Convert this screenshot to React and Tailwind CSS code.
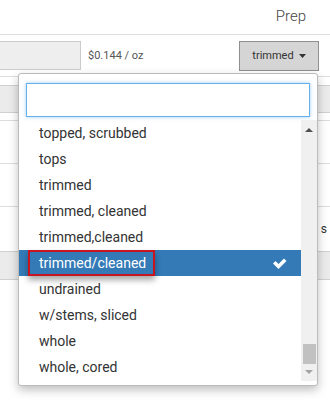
import React from "react";

const items = [
  "topped, scrubbed",
  "tops",
  "trimmed",
  "trimmed, cleaned",
  "trimmed,cleaned",
  "trimmed/cleaned",
  "undrained",
  "w/stems, sliced",
  "whole",
  "whole, cored",
];

export default function App() {
  return (
    <div
      className="relative w-[330px] h-[404px] overflow-hidden bg-white text-[#555]"
      style={{ fontFamily: "Roboto, 'Liberation Sans', sans-serif" }}
    >
      {/* background page */}
      <div className="flex flex-col">
        <div className="h-[35px] border-b border-[#dddddd] flex items-start justify-end pr-[24px] pt-[7px]">
          <span className="text-[15px] font-light text-[#444] leading-[18px]">Prep</span>
        </div>
        <div className="h-[42px] border-b border-[#dddddd] flex items-start pt-[6px]">
          <div className="w-[81px] h-[29px] bg-[#eeeeee] border border-[#cccccc] border-l-0" />
          <span className="ml-[7px] mt-[7px] text-[11px] text-[#555]">$0.144 / oz</span>
          <div className="ml-auto mr-[11px] w-[80px] h-[30px] bg-[#d5d5d5] border border-[#8f8f8f] flex items-center justify-center gap-[5px] text-[11px] text-[#333]">
            <span>trimmed</span>
            <svg width="7" height="4" viewBox="0 0 7 4"><path d="M0 0h7L3.5 4z" fill="#333" /></svg>
          </div>
        </div>
        <div className="h-[44px] border-b border-[#dddddd] pt-[8px]">
          <div className="h-[28px] bg-[#ebebeb] border-y border-[#d0d0d0]" />
        </div>
        <div className="h-[43px] border-b border-[#dddddd]" />
        <div className="h-[43px] border-b border-[#dddddd]" />
        <div className="h-[44px] flex items-center justify-end">
          <span className="text-[12px] text-[#333] mr-[3px]">s</span>
        </div>
        <div className="h-[29px] bg-[#ebebeb] border-y border-[#d0d0d0]" />
      </div>

      {/* dropdown */}
      <div className="absolute left-[18px] top-[73px] w-[300px] h-[313px] bg-white border border-[#bbbbbb] rounded-[3px] shadow-[0_4px_10px_rgba(0,0,0,0.25)] flex flex-col">
        <div className="px-[7px] pt-[9px] pb-[3px]">
          <div className="h-[34px] border border-[#66afe9] shadow-[0_0_4px_rgba(102,175,233,0.6)] bg-white" />
        </div>
        <div className="flex flex-1 pb-[4px]">
          <div className="flex-1 flex flex-col">
            {items.map((it) => {
              const sel = it === "trimmed/cleaned";
              return (
                <div
                  key={it}
                  className={
                    "relative h-[26px] flex items-center pl-[20px] text-[14px] " +
                    (sel ? "bg-[#337ab7] text-white" : "text-[#333]")
                  }
                >
                  {sel && (
                    <div className="absolute left-[9px] top-0 w-[127px] h-[26px] border-2 border-[#c8141e] shadow-[0_4px_6px_rgba(0,0,0,0.35)]" />
                  )}
                  <span className="relative">{it}</span>
                  {sel && (
                    <svg className="absolute right-[14px] top-[7px]" width="15" height="12" viewBox="0 0 15 12">
                      <path d="M1 6.5l2.5-2.5 3 3L12 1.5l2.5 2.5-8 8z" fill="#fff" />
                    </svg>
                  )}
                </div>
              );
            })}
          </div>
          <div className="w-[16px] bg-[#f0f0f0] flex flex-col items-center">
            <svg className="mt-[8px]" width="8" height="4" viewBox="0 0 8 4"><path d="M0 4h8L4 0z" fill="#505050" /></svg>
            <div className="flex-1" />
            <div className="w-[13px] h-[20px] bg-[#c1c1c1]" />
            <svg className="mt-[6px] mb-[7px]" width="8" height="4" viewBox="0 0 8 4"><path d="M0 0h8L4 4z" fill="#a3a3a3" /></svg>
          </div>
        </div>
      </div>
    </div>
  );
}
